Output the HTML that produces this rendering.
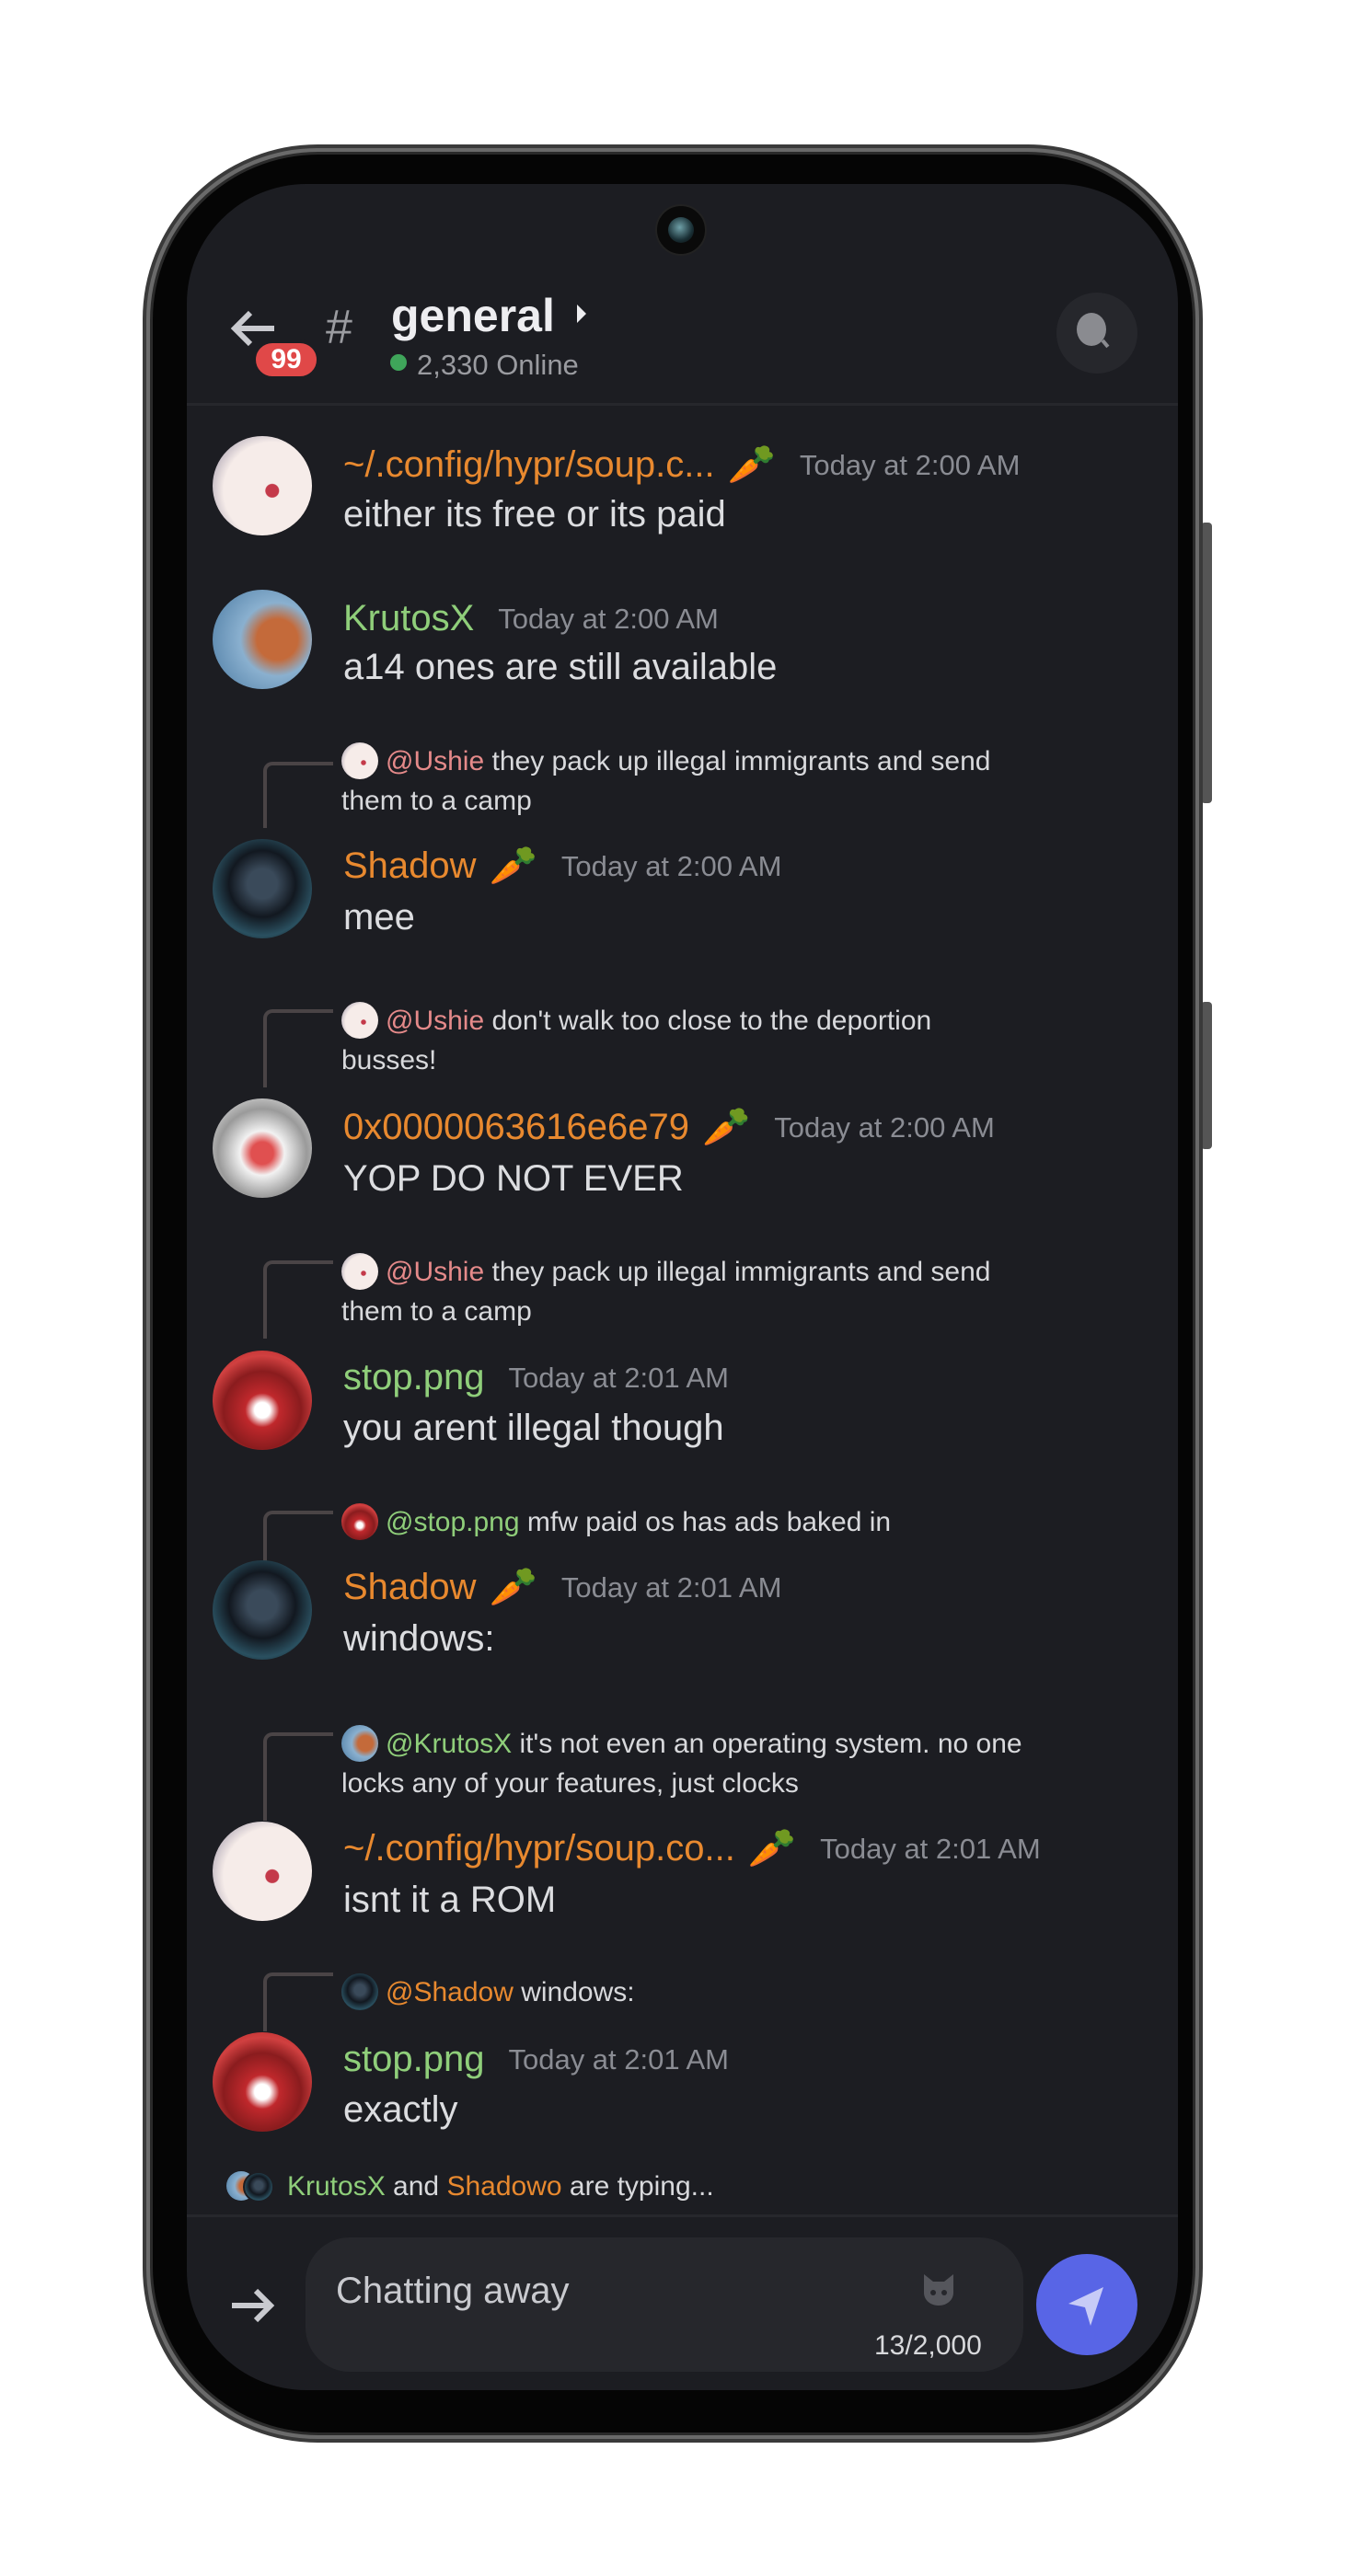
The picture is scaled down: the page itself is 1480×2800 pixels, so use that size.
<!DOCTYPE html>
<html><head><meta charset="utf-8"><style>
*{margin:0;padding:0;box-sizing:border-box}
body{width:1480px;height:2800px;background:#fff;position:relative;overflow:hidden;font-family:"Liberation Sans",sans-serif}
.a{position:absolute}
.phone{left:155px;top:157px;width:1152px;height:2498px;border-radius:190px;background:#6a6a6a;border:4px solid #3a3a3a}
.inner{left:166px;top:168px;width:1130px;height:2476px;border-radius:180px;background:#050505;box-shadow:0 0 0 3px #2a2a2a}
.screen{left:203px;top:200px;width:1077px;height:2398px;border-radius:130px;background:#1c1d22;overflow:hidden}
.t{position:absolute;white-space:nowrap;line-height:1}
.hd{position:absolute;white-space:nowrap;display:flex;align-items:center;line-height:1}
.name{font-size:40px}
.cr{font-size:42px;margin-left:14px}
.msg{font-size:40px;color:#dcdde0}
.time{font-size:31px;color:#8a8c93;margin-left:26px}
.rep{font-size:30px;color:#d8d9dc;line-height:43px;white-space:normal;width:860px}
.or{color:#e8892f}.gr{color:#8fce7a}.pk{color:#e58a8a}
.av{position:absolute;width:108px;height:108px;border-radius:50%}
.ra{display:inline-block;width:40px;height:40px;border-radius:50%;vertical-align:-10px;margin-right:8px}
.con{position:absolute;border-left:4px solid #4a4446;border-top:4px solid #4a4446;border-top-left-radius:10px;width:76px}
.soup{background:radial-gradient(circle at 60% 55%,#c43a4a 0 8%,#f6ece9 9% 60%,#c9c0c8 75%,#eee 100%)}
.kru{background:radial-gradient(circle at 65% 50%,#c46a3a 0 25%,#8ab0cf 45%,#4b7aa2 100%)}
.sha{background:radial-gradient(circle at 50% 45%,#3a4a5a 0 20%,#121820 45%,#2a5060 70%,#0b0d10 100%)}
.hex{background:radial-gradient(circle at 50% 55%,#e05050 0 15%,#f2f2f2 30%,#9a9a9a 60%,#f5f5f5 100%)}
.stop{background:radial-gradient(circle at 50% 60%,#fff 0 10%,#c0282c 22%,#8a1c1e 50%,#d04040 70%,#b02020 100%)}
</style></head><body>
<div class="a" style="left:1305px;top:568px;width:12px;height:305px;border-radius:4px;background:#555"></div>
<div class="a" style="left:1305px;top:1089px;width:12px;height:160px;border-radius:4px;background:#555"></div>
<div class="a phone"></div>
<div class="a inner"></div>
<div class="a screen"></div>
<div class="a" style="left:712px;top:222px;width:56px;height:56px;border-radius:50%;background:#0a0a0a;border:2px solid #222"></div>
<div class="a" style="left:726px;top:236px;width:28px;height:28px;border-radius:50%;background:radial-gradient(circle at 45% 40%,#6fa0a8,#1a3036 60%,#050505)"></div>
<svg class="a" style="left:248px;top:332px" width="54" height="50" viewBox="0 0 54 50"><path d="M50 25H8M24 8 7 25l17 17" stroke="#c9cacf" stroke-width="6" fill="none"/></svg>
<div class="a" style="left:274px;top:369px;width:74px;height:44px;border-radius:22px;background:#e04848;border:4px solid #1c1d22"></div>
<div class="t" style="left:274px;top:376px;width:74px;text-align:center;color:#fff;font-size:30px;font-weight:bold">99</div>
<div class="t" style="left:354px;top:330px;font-size:52px;color:#9a9ba0">#</div>
<div class="t" style="left:425px;top:318px;font-size:50px;color:#ededf0;font-weight:bold">general</div>
<svg class="a" style="left:625px;top:329px" width="14" height="24"><path d="M2 2l10 10-10 10z" fill="#ededf0"/></svg>
<div class="a" style="left:424px;top:385px;width:18px;height:18px;border-radius:50%;background:#3fa55a"></div>
<div class="t" style="left:453px;top:381px;font-size:31px;color:#9a9ba0">2,330 Online</div>
<div class="a" style="left:1148px;top:318px;width:88px;height:88px;border-radius:50%;background:#26272c"></div>
<div class="a" style="left:1170px;top:340px;width:32px;height:36px;border-radius:50%;background:#8a8b90"></div>
<div class="a" style="left:1199px;top:369px;width:4px;height:9px;background:#8a8b90;transform:rotate(-40deg)"></div>
<div class="a" style="left:203px;top:438px;width:1077px;height:3px;background:#26272c"></div>

<div class="av soup" style="left:231px;top:474px"></div>
<div class="hd" style="left:373px;top:482px;height:46px"><span class="name or">~/.config/hypr/soup.c...</span><span class="cr">🥕</span><span class="time">Today at 2:00 AM</span></div>
<div class="t msg" style="left:373px;top:539px">either its free or its paid</div>

<div class="av kru" style="left:231px;top:641px"></div>
<div class="hd" style="left:373px;top:649px;height:46px"><span class="name gr">KrutosX</span><span class="time">Today at 2:00 AM</span></div>
<div class="t msg" style="left:373px;top:705px">a14 ones are still available</div>

<div class="con" style="left:286px;top:828px;height:72px"></div>
<div class="t rep" style="left:371px;top:806px"><span class="ra soup"></span><span class="pk">@Ushie</span> they pack up illegal immigrants and send<br>them to a camp</div>
<div class="av sha" style="left:231px;top:912px"></div>
<div class="hd" style="left:373px;top:918px;height:46px"><span class="name or">Shadow</span><span class="cr">🥕</span><span class="time">Today at 2:00 AM</span></div>
<div class="t msg" style="left:373px;top:977px">mee</div>

<div class="con" style="left:286px;top:1097px;height:85px"></div>
<div class="t rep" style="left:371px;top:1088px"><span class="ra soup"></span><span class="pk">@Ushie</span> don't walk too close to the deportion<br>busses!</div>
<div class="av hex" style="left:231px;top:1194px"></div>
<div class="hd" style="left:373px;top:1202px;height:46px"><span class="name or">0x0000063616e6e79</span><span class="cr">🥕</span><span class="time">Today at 2:00 AM</span></div>
<div class="t msg" style="left:373px;top:1261px">YOP DO NOT EVER</div>

<div class="con" style="left:286px;top:1370px;height:85px"></div>
<div class="t rep" style="left:371px;top:1361px"><span class="ra soup"></span><span class="pk">@Ushie</span> they pack up illegal immigrants and send<br>them to a camp</div>
<div class="av stop" style="left:231px;top:1468px"></div>
<div class="hd" style="left:373px;top:1474px;height:46px"><span class="name gr">stop.png</span><span class="time">Today at 2:01 AM</span></div>
<div class="t msg" style="left:373px;top:1532px">you arent illegal though</div>

<div class="con" style="left:286px;top:1642px;height:56px"></div>
<div class="t rep" style="left:371px;top:1633px"><span class="ra stop"></span><span class="gr">@stop.png</span> mfw paid os has ads baked in</div>
<div class="av sha" style="left:231px;top:1696px"></div>
<div class="hd" style="left:373px;top:1702px;height:46px"><span class="name or">Shadow</span><span class="cr">🥕</span><span class="time">Today at 2:01 AM</span></div>
<div class="t msg" style="left:373px;top:1761px">windows:</div>

<div class="con" style="left:286px;top:1883px;height:96px"></div>
<div class="t rep" style="left:371px;top:1874px"><span class="ra kru"></span><span class="gr">@KrutosX</span> it's not even an operating system. no one<br>locks any of your features, just clocks</div>
<div class="av soup" style="left:231px;top:1980px"></div>
<div class="hd" style="left:373px;top:1986px;height:46px"><span class="name or">~/.config/hypr/soup.co...</span><span class="cr">🥕</span><span class="time">Today at 2:01 AM</span></div>
<div class="t msg" style="left:373px;top:2045px">isnt it a ROM</div>

<div class="con" style="left:286px;top:2144px;height:64px"></div>
<div class="t rep" style="left:371px;top:2144px"><span class="ra sha"></span><span class="or">@Shadow</span> windows:</div>
<div class="av stop" style="left:231px;top:2209px"></div>
<div class="hd" style="left:373px;top:2215px;height:46px"><span class="name gr">stop.png</span><span class="time">Today at 2:01 AM</span></div>
<div class="t msg" style="left:373px;top:2273px">exactly</div>

<div class="a kru" style="left:246px;top:2360px;width:32px;height:32px;border-radius:50%"></div>
<div class="a sha" style="left:264px;top:2360px;width:34px;height:34px;border-radius:50%;border:2px solid #1c1d22"></div>
<div class="t" style="left:312px;top:2362px;font-size:30px;color:#d8d9dc"><span class="gr">KrutosX</span> and <span class="or">Shadowo</span> are typing...</div>
<div class="a" style="left:203px;top:2407px;width:1077px;height:3px;background:#26272c"></div>

<svg class="a" style="left:250px;top:2484px" width="50" height="44" viewBox="0 0 50 44"><path d="M2 22h40M28 6l16 16-16 16" stroke="#c9cacf" stroke-width="6" fill="none"/></svg>
<div class="a" style="left:332px;top:2432px;width:780px;height:146px;border-radius:48px;background:#26272c"></div>
<div class="t" style="left:365px;top:2455px;font-size:40px;color:#c9cacf;line-height:70px">Chatting away</div>
<svg class="a" style="left:998px;top:2466px" width="44" height="44" viewBox="0 0 44 44"><path d="M6 6l10 8h12l10-8v20c0 8-7 14-16 14S6 34 6 26z" fill="#55565c"/><circle cx="16" cy="26" r="3" fill="#26272c"/><circle cx="28" cy="26" r="3" fill="#26272c"/></svg>
<div class="t" style="left:950px;top:2535px;font-size:30px;color:#d8d9dc">13/2,000</div>
<div class="a" style="left:1126px;top:2450px;width:110px;height:110px;border-radius:50%;background:#5865e6"></div>
<svg class="a" style="left:1153px;top:2478px" width="56" height="56" viewBox="0 0 56 56"><path d="M46 8 8 26l18 4 6 20z" fill="#c7cbf7"/></svg>
</body></html>
